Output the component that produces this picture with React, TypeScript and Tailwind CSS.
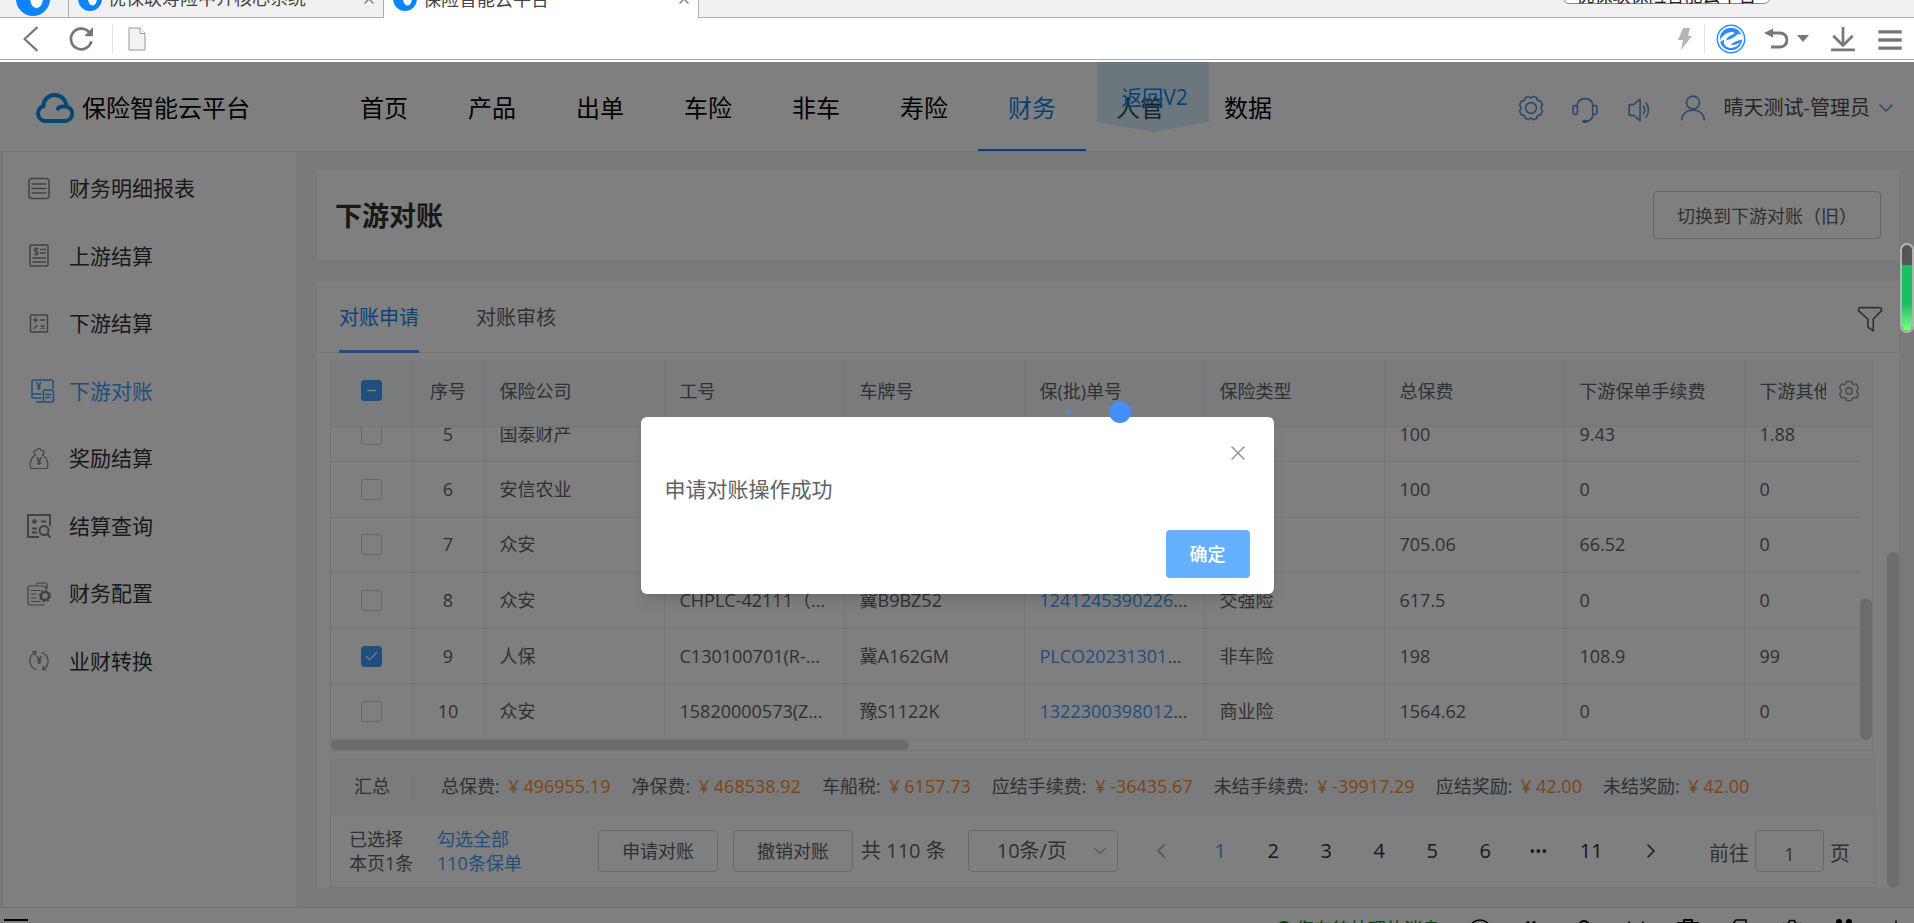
import { ChevronDown, ChevronLeft, ChevronRight, Check, Minus, X } from 'lucide-react';
import { ReactNode } from 'react';

const navItems = ['首页', '产品', '出单', '车险', '非车', '寿险', '财务', '人管', '数据']

const line = {
  fill: 'none',
  stroke: 'currentColor',
  strokeLinecap: 'round',
  strokeLinejoin: 'round',
} as const

const Svg = ({ className, width = 1.5, children }: { className: string; width?: number; children: ReactNode }) => (
  <svg viewBox="0 0 24 24" className={className} strokeWidth={width} {...line} aria-hidden="true">
    {children}
  </svg>
)

const Yen = ({ x, y, size = 9 }: { x: number; y: number; size?: number }) => (
  <text x={x} y={y} fontSize={size} textAnchor="middle" fill="currentColor" stroke="none" fontWeight="bold">¥</text>
)

const menuItems = [
  {
    title: '财务明细报表',
    icon: (
      <Svg className="size-6">
        <rect x="2" y="1.500" width="20" height="20" rx="3" />
        <path d="M5 7h14M5 11.500h14M5 16h14" />
      </Svg>
    )
  },
  {
    title: '上游结算',
    icon: (
      <Svg className="size-6">
        <rect x="3" y="1" width="18" height="21" rx="1" />
        <path d="M13.500 5.500h5M13.500 9h5M6 14h12.500M6 18h12.500" />
        <text x="9" y="11" fontSize="10" textAnchor="middle" fill="currentColor" stroke="none" fontWeight="bold">$</text>
      </Svg>
    )
  },
  {
    title: '下游结算',
    icon: (
      <Svg className="size-6">
        <rect x="3.500" y="3" width="17" height="17" rx="1" />
        <path d="M6.500 8h4M8.500 6v4M13.500 8h4M7 16.500l3-3M14 13.500l3 3M17 13.500l-3 3" />
      </Svg>
    )
  },
  {
    title: '下游对账',
    active: true,
    icon: (
      <Svg className="size-6 translate-x-1">
        <path d="M22 9V3a2 2 0 0 0-2-2H3a2 2 0 0 0-2 2v12h9M1 15v3a1 1 0 0 0 1 1h8M6 23h6" />
        <rect x="12.500" y="11" width="10" height="12" rx="1.500" />
        <path d="M15 15.500h5M15 18.500h4" />
        <Yen x={7.500} y={11} size={10} />
      </Svg>
    )
  },
  {
    title: '奖励结算',
    icon: (
      <Svg className="size-6" width={1.2}>
        <path d="M8.500 8C7.500 6.500 6.500 5.500 7 4c1-.8 1.800-.3 2.500-.8.800-.6 1-1.700 2.500-1.700s1.700 1.100 2.500 1.700c.7.5 1.500 0 2.500.8.5 1.500-.5 2.500-1.500 4M8.500 8C5 10 3.500 13 3.200 17c-.2 3 .3 4.500 1.800 4.500h14c1.500 0 2-1.500 1.800-4.500-.3-4-1.800-7-5.300-9" />
        <Yen x={12} y={18} size={10} />
      </Svg>
    )
  },
  {
    title: '结算查询',
    icon: (
      <Svg className="size-6" width={2}>
        <path d="M23 12V1H1v22h11M5 7.500h5M7.500 5v5M14 7.500h5M5 14.500h5M5 18.500h5" strokeLinecap="butt" />
        <circle cx="17" cy="16.500" r="4.500" />
        <path d="m20.500 20 2.500 3" />
      </Svg>
    )
  },
  {
    title: '财务配置',
    icon: (
      <Svg className="size-6" width={1.2}>
        <path d="M17 23H3a2 2 0 0 1-2-2V6a2 2 0 0 1 2-2h13a3 3 0 0 1 3 3M9 4c0-2 1-3 2-3h7a2 2 0 0 1 2 2v3M4 8.500h9M4 12h5M4 16h5M4 19.500h9" />
        <circle cx="18" cy="14" r="4" strokeWidth="2.500" />
        <circle cx="18" cy="14" r="5.500" strokeWidth="1.500" strokeDasharray="2 2.300" strokeLinecap="butt" />
      </Svg>
    )
  },
  {
    title: '业财转换',
    icon: (
      <Svg className="size-6" width={1.2}>
        <path d="M9 20.500A9.500 9.500 0 0 1 8.500 3M5.500 2.500l3.500.3-1 3.700M15 3.500a9.500 9.500 0 0 1 1.500 17M19.500 21l-4-.5 1-3.500" />
        <Yen x={12} y={15} size={10} />
      </Svg>
    )
  },
]

const columns = ['保险公司', '工号', '车牌号', '保(批)单号', '保险类型', '总保费', '下游保单手续费', '下游其他费用']

type Row = {
  no: number
  checked?: boolean
  cells: string[]
}

// cells: company, staff no, plate, policy no, type, premium, fee, other
const rows: Row[] = [
  { no: 5, cells: ['国泰财产', '', '', '', '', '100', '9.43', '1.88'] },
  { no: 6, cells: ['安信农业', '', '', '', '', '100', '0', '0'] },
  { no: 7, cells: ['众安', '', '', '', '', '705.06', '66.52', '0'] },
  { no: 8, cells: ['众安', 'CHPLC-42111（...', '冀B9BZ52', '1241245390226', '交强险', '617.5', '0', '0'] },
  { no: 9, checked: true, cells: ['人保', 'C130100701(R-...', '冀A162GM', 'PLCO20231301', '非车险', '198', '108.9', '99'] },
  { no: 10, cells: ['众安', '15820000573(Z...', '豫S1122K', '1322300398012', '商业险', '1564.62', '0', '0'] },
]

const totals = [
  ['总保费', '496955.19'],
  ['净保费', '468538.92'],
  ['车船税', '6157.73'],
  ['应结手续费', '-36435.67'],
  ['未结手续费', '-39917.29'],
  ['应结奖励', '42.00'],
  ['未结奖励', '42.00'],
]

const Favicon = ({ className }: { className: string }) => (
  <svg viewBox="0 0 24 24" className={className} aria-hidden="true">
    <circle cx="12" cy="12" r="12" fill="#0a84ff" />
    <ellipse cx="14.500" cy="11.500" rx="4.500" ry="7" fill="#fff" />
  </svg>
)

const BrowserTab = ({ title, active }: { title: string; active?: boolean }) => (
  <div className={active
    ? 'flex h-[38px] w-[314px] items-center bg-white pl-[9px] pr-[6px]'
    : 'flex h-[38px] w-[315px] items-center border-b border-r border-[#b0b0b0] bg-[#f1f1f1] pl-[9px] pr-[6px]'}
  >
    <Favicon className="size-6" />
    <span className="ml-[6px] flex-1 whitespace-nowrap text-[18px] text-[#444]">{title}</span>
    <button aria-label="关闭标签页" className="text-[#777]"><X className="size-4" strokeWidth={2} /></button>
  </div>
)

const BrowserChrome = () => (
  <div className="shrink-0 bg-white">
    <div className="flex h-[18px] items-end overflow-hidden bg-[#f1f1f1]">
      <div className="flex h-[38px] w-[69px] items-center border-b border-r border-[#b0b0b0] pl-4">
        <Favicon className="size-[34px]" />
      </div>
      <BrowserTab title="优保联寿险中介核心系统" />
      <BrowserTab title="保险智能云平台" active />
      <div className="flex h-[38px] flex-1 items-start justify-end border-b border-l border-[#b0b0b0] pr-36">
        <div className="flex h-6 w-[207px] items-end justify-center rounded-b-md border border-[#888] bg-white text-[18px] leading-4 text-[#222]">
          <span className="whitespace-nowrap">优保联保险智能云平台</span>
        </div>
      </div>
    </div>
    <div className="flex h-[42px] items-center border-b border-[#aaa] pl-[18px] pr-[10px] text-[#777]">
      <button aria-label="后退">
        <Svg className="size-[26px]" width={2}><path d="M18 1 6 12l12 11" strokeLinecap="butt" /></Svg>
      </button>
      <button aria-label="刷新" className="ml-6">
        <Svg className="size-[26px]" width={2.5}>
          <path d="M20 6.500A9.500 9.500 0 1 0 21.500 14" strokeLinecap="butt" />
          <path d="M23 1v8.500h-8z" fill="currentColor" stroke="none" />
        </Svg>
      </button>
      <div className="ml-[18px] h-7 w-px bg-[#e2e2e2]" />
      <svg viewBox="0 0 18 24" className="ml-[15px] h-6 w-[18px]" aria-hidden="true">
        <path d="M1 1h11l5 5.500V23H1z" fill="#f3f3f3" stroke="#999" />
        <path d="M12 1v5.500h5" fill="#fff" stroke="#999" />
      </svg>
      <div className="ml-auto flex items-center">
        <svg viewBox="0 0 14 24" className="h-6 w-[14px]" aria-hidden="true">
          <path d="M5 1h7l-2 8h4L3 23l2-10H0z" fill="#b5b5b5" />
        </svg>
        <div className="ml-3 h-7 w-px bg-[#e2e2e2]" />
        <svg viewBox="0 0 30 30" className="ml-[11px] size-[30px]" aria-hidden="true">
          <circle cx="15" cy="15" r="13.700" fill="#fff" stroke="#2f8cff" strokeWidth="1.500" />
          <circle cx="15" cy="15" r="11.200" fill="#2f8cff" />
          <path d="M2.500 17.500C6 10.500 12 7.500 17.500 8.300c2.500.5 1.500 2-1 2.700-3.500 1-5.500 2.500-6.500 5 5-1 9-3 11-4.500 2.500-1.500 4.500-.5 6 2v3c-6 .5-10 2-13 4 3 1.500 6.500.5 10-1-3 3.500-8 5.500-12 4-4-1.500-5-4.500-4-8.500-2 .8-4.500 1.500-5.500 2.500z" fill="#fff" transform="rotate(-6 15 15)" />
          <path d="M12 14.500c1-1.800 3-3 5.500-3.200 1.300 0 1 1.200-.5 1.800-1.500.7-3.200 1.200-5 1.400z" fill="#2f8cff" />
        </svg>
        <button aria-label="撤销" className="ml-[18px]">
          <Svg className="size-6" width={2.8}>
            <path d="M8 6h8a6.500 6.500 0 0 1 0 14H7" strokeLinecap="butt" />
            <path d="M0 6l9-4.500v9z" fill="currentColor" stroke="none" />
          </Svg>
        </button>
        <svg viewBox="0 0 12 7" className="ml-[9px] h-[7px] w-3" aria-hidden="true"><path d="M0 0h12L6 7z" fill="#777" /></svg>
        <button aria-label="下载" className="ml-[21px]">
          <Svg className="size-[26px]" width={2.5}><path d="M12 1v16M3 9l9 9 9-9M1 22h22" strokeLinecap="butt" /></Svg>
        </button>
        <button aria-label="菜单" className="ml-5">
          <Svg className="size-[28px] translate-y-px" width={2.8}><path d="M2 5h20M2 12h20M2 19h20" strokeLinecap="butt" /></Svg>
        </button>
      </div>
    </div>
    <div className="h-[2px]" />
  </div>
)

const Gear = ({ className }: { className: string }) => (
  <Svg className={className}>
    <path d="M9.500 1.500h5l1 2.500 2 1 2.800-.7 2 4.200L20.500 11v2l1.800 2.500-2 4.200-2.800-.7-2 1-1 2.500h-5l-1-2.500-2-1-2.800.7-2-4.200L3.500 13v-2L1.700 8.500l2-4.200L6.500 5l2-1z" />
    <circle cx="12" cy="12" r="3.500" />
  </Svg>
)

// eight-tooth gear used in the top bar
const SettingsGear = ({ className }: { className: string }) => (
  <Svg className={className}>
    <path d="M9.800 1.300c.6 1.500 3.800 1.500 4.400 0l3.500 1.300c-.7 1.700 1.200 3.600 3 2.900l2 3.800c-1.700.8-1.700 4.600 0 5.400l-2 3.800c-1.800-.7-3.700 1.200-3 2.900l-3.500 1.300c-.6-1.500-3.800-1.500-4.400 0l-3.500-1.300c.7-1.700-1.200-3.600-3-2.900l-2-3.800c1.700-.8 1.700-4.600 0-5.400l2-3.800c1.800.7 3.700-1.200 3-2.900z" />
    <circle cx="12" cy="12" r="5" />
  </Svg>
)

const Header = () => (
  <header className="flex h-[90px] shrink-0 items-center border-b border-[#e6e6e6] bg-white pr-4">
    <div className="flex w-[330px] shrink-0 items-center pl-[35px] pt-[2px]">
      <svg viewBox="0 0 39 30" className="h-[30px] w-[39px]" fill="none" stroke="#0a8fe8" strokeWidth="4" strokeLinecap="round" aria-hidden="true">
        <path d="M9 28h21a7.300 7.300 0 0 0 1.500-14.400C31 6.500 26 2 19.500 2S8.500 7 8.500 13A7.800 7.800 0 0 0 9 28zM31 13.600c-4-.5-7 0-8 2" />
      </svg>
      <span className="ml-2 whitespace-nowrap text-2xl text-black">保险智能云平台</span>
    </div>
    <nav className="flex h-full">
      {navItems.map(item => (
        <a
          key={item}
          href="#"
          className={item === '财务'
            ? 'flex w-[108px] items-center justify-center border-b-2 border-[#1083ee] pt-1 text-2xl text-[#1083ee]'
            : 'flex w-[108px] items-center justify-center border-b-2 border-transparent pt-1 text-2xl text-black'}
        >
          {item}
        </a>
      ))}
    </nav>
    <div className="ml-auto flex items-center pt-[3px] text-[#5a92d6]">
      <button aria-label="设置"><SettingsGear className="size-[26px]" /></button>
      <button aria-label="客服" className="ml-7 translate-y-[2px]">
        <Svg className="size-[26px]">
          <path d="M4.500 8.500C5 4 8 1.500 12 1.500S19 4 19.500 8.500M19.500 16c-.5 4-3 6-6.500 6.500" />
          <rect x="1" y="8" width="4" height="8" rx="1.500" />
          <rect x="19" y="8" width="4" height="8" rx="1.500" />
          <path d="M11 22.500h2" strokeWidth="3" />
        </Svg>
      </button>
      <button aria-label="消息" className="ml-7 translate-y-[2px]">
        <Svg className="size-[26px]">
          <path d="M3 7h4l6-5v20l-6-5H3zM16 8.500c1.500 2 1.500 5 0 7M18.500 5.500c3 3.500 3 9.500 0 13" />
        </Svg>
      </button>
      <Svg className="ml-7 size-[26px]">
        <circle cx="12" cy="7" r="6" />
        <path d="M1.500 23c.5-6 5-9 10.500-9s10 3 10.500 9" />
      </Svg>
      <button className="ml-[18px] flex items-center whitespace-nowrap text-xl text-[#4a4a4a]">
        晴天测试-管理员
        <ChevronDown className="ml-1 size-6 text-[#5a92d6]" strokeWidth={1.5} />
      </button>
    </div>
  </header>
)

const Sidebar = () => (
  <aside className="w-[298px] shrink-0 border-l-[3px] border-r border-l-[#f0f0f0] border-r-[#e0e0e0] bg-white pt-[3px]">
    <nav className="grid h-[540px] grid-rows-8">
      {menuItems.map(item => (
        <a
          key={item.title}
          href="#"
          className={item.active
            ? 'flex items-center gap-[18px] pl-6 text-[21px] text-[#409eff]'
            : 'flex items-center gap-[18px] pl-6 text-[21px] text-[#303133]'}
        >
          <span className={item.active ? '' : 'text-[#80848c]'}>{item.icon}</span>
          {item.title}
        </a>
      ))}
    </nav>
  </aside>
)

const Checkbox = ({ checked, partial, label }: { checked?: boolean; partial?: boolean; label: string }) => (
  <label className="relative mx-auto flex size-[21px]">
    <input
      type="checkbox"
      aria-label={label}
      defaultChecked={checked}
      className="size-[21px] appearance-none rounded-[3px] border border-[#c8ccd4] checked:border-[#409eff] checked:bg-[#409eff]"
    />
    {checked && !partial && <Check className="pointer-events-none absolute left-[3px] top-[3px] size-[15px] text-white" />}
    {partial && <Minus className="pointer-events-none absolute left-1 top-1 size-[13px] text-white" strokeWidth={3} />}
  </label>
)

const Cols = () => (
  <colgroup>
    <col className="w-[81px]" />
    <col className="w-[72px]" />
    {columns.map((c, i) => <col key={c} className={i < columns.length - 1 ? 'w-[180px]' : ''} />)}
  </colgroup>
)

const DataTable = () => (
  <div className="mr-[3px] flex min-h-0 flex-1 flex-col border-x border-b border-[#e6e9f2] text-[18px] text-[#606266]">
    <div className="h-[67px] shrink-0 border-b border-[#e6e9f2] bg-[#f3f6fa]">
      <table className="h-full w-full table-fixed border-collapse">
        <Cols />
        <thead>
          <tr>
            <th className="border-r border-[#e6e9f2] pb-[6px]"><Checkbox label="全选" checked partial /></th>
            <th className="border-r border-[#e6e9f2] pb-1 font-normal">序号</th>
            {columns.map((c, i) => i < columns.length - 1 ? (
              <th key={c} className="border-r border-[#e6e9f2] pb-1 pl-[15px] text-left font-normal">{c}</th>
            ) : (
              <th key={c} className="pb-1 pl-[15px] font-normal">
                <div className="flex items-center">
                  <span className="min-w-0 flex-1 overflow-hidden whitespace-nowrap text-left">{c}</span>
                  <button aria-label="列设置" className="flex w-[46px] shrink-0 items-center justify-center text-[#8a8e96]">
                    <Gear className="size-[22px]" />
                  </button>
                </div>
              </th>
            ))}
          </tr>
        </thead>
      </table>
    </div>
    <div className="relative flex min-h-0 flex-1 flex-col justify-end overflow-hidden pr-[11px]">
      <table className="h-[333px] w-full shrink-0 table-fixed border-collapse">
        <Cols />
        <tbody>
          {rows.map(row => (
            <tr key={row.no} className="border-b border-[#e6e9f2]">
              <td className="border-r border-[#e6e9f2]"><Checkbox label={`选择第${row.no}行`} checked={row.checked} /></td>
              <td className="border-r border-[#e6e9f2] text-center">{row.no}</td>
              {row.cells.map((cell, i) => (
                <td
                  key={i}
                  className={i < row.cells.length - 1
                    ? 'overflow-hidden whitespace-nowrap border-r border-[#e6e9f2] pl-[15px]'
                    : 'overflow-hidden whitespace-nowrap pl-[15px]'}
                >
                  {i === 3 && cell ? <><a href="#" className="text-[#409eff]">{cell}</a>...</> : cell}
                </td>
              ))}
            </tr>
          ))}
        </tbody>
      </table>
      <div className="absolute bottom-0 right-0 h-[142px] w-3 rounded-full bg-[#d8d8d8]" />
    </div>
    <div className="h-[10px] shrink-0">
      <div className="h-full w-3/8 rounded-full bg-[#d8d8d8]" />
    </div>
  </div>
)

const Summary = () => (
  <div className="mt-[7px] flex h-[57px] shrink-0 items-center whitespace-nowrap border-b border-[#e6e9f2] bg-[#f3f6fa] pl-6 text-[18px] text-[#606266]">
    <span>汇总</span>
    <span className="ml-[22px] mr-7 h-6 w-px bg-[#dcdfe6]" />
    <div className="flex gap-[21px]">
      {totals.map(([label, value]) => (
        <span key={label}>
          {label}: <span className="ml-1 text-[#ff8a1e]">¥ {value}</span>
        </span>
      ))}
    </div>
  </div>
)

const Pager = () => (
  <div className="flex h-[73px] shrink-0 items-center whitespace-nowrap border-x border-b border-[#e6e9f2] pl-[18px] pr-[25px] text-[18px] text-[#606266]">
    <div className="w-[88px] leading-6">已选择<br />本页1条</div>
    <a href="#" className="w-[161px] leading-6 text-[#409eff]">勾选全部<br />110条保单</a>
    <button className="h-[42px] w-[120px] rounded border border-[#d0d3dc]">申请对账</button>
    <button className="ml-[15px] h-[42px] w-[120px] rounded border border-[#d0d3dc]">撤销对账</button>
    <span className="ml-2 text-xl">共 110 条</span>
    <div className="relative ml-[22px]">
      <select aria-label="每页条数" className="h-[42px] w-[150px] appearance-none rounded border border-[#d0d3dc] bg-transparent pl-7 text-xl">
        <option>10条/页</option>
      </select>
      <ChevronDown className="pointer-events-none absolute right-2 top-[11px] size-5 text-[#b4b8c0]" strokeWidth={1.5} />
    </div>
    <div className="ml-[17px] flex items-center text-xl text-[#303133]">
      <button aria-label="上一页" className="mr-[6px] flex w-[53px] justify-center text-[#b4b8c0]"><ChevronLeft className="size-6" /></button>
      {['1', '2', '3', '4', '5', '6', '•••', '11'].map(p => (
        <button
          key={p}
          className={p === '1'
            ? 'w-[53px] text-[#409eff]'
            : p === '•••' ? 'w-[53px] text-base' : 'w-[53px]'}
        >
          {p}
        </button>
      ))}
      <button aria-label="下一页" className="flex w-[66px] justify-center"><ChevronRight className="size-6" strokeWidth={1.5} /></button>
    </div>
    <label className="ml-auto flex items-center gap-[6px] text-xl">
      <span className="pt-[6px]">前往</span>
      <input defaultValue="1" className="h-[42px] w-[69px] rounded border border-[#d0d3dc] bg-transparent pt-[6px] text-center text-[18px]" />
      <span className="pt-[6px]">页</span>
    </label>
  </div>
)

const StatusBar = () => (
  <footer className="flex h-4 shrink-0 items-start overflow-hidden border-t border-[#e0e0e0] bg-white pl-1 pr-[6px] pt-[11px] text-black">
    <div className="h-[2px] w-6 bg-black" />
    <div className="ml-auto flex items-start gap-7">
      <span className="flex items-center gap-1 whitespace-nowrap text-[18px] leading-5 text-[#008a00]">
        <span className="size-4 rounded-full bg-[#008a00]" />您有待处理的消息
      </span>
      <Svg className="size-6"><ellipse cx="12" cy="10" rx="10" ry="9" /></Svg>
      <Svg className="size-6"><path d="M7 3h2M13 3h2" /></Svg>
      <Svg className="size-6" width={2}><circle cx="12" cy="7" r="5" /></Svg>
      <Svg className="size-6"><path d="M5 3v8M19 3v8" /></Svg>
      <Svg className="size-6" width={2}><path d="M2 4h20v16H2zM8 4V1h8v3" /></Svg>
      <Svg className="size-6"><path d="M4 20V6l4-5h10v4h-6v15" /></Svg>
      <Gear className="size-6" />
      <Svg className="size-6" width={3}><circle cx="7" cy="3" r="1.500" /><circle cx="17" cy="3" r="1.500" /></Svg>
      <Svg className="size-6"><path d="M12 2v8M6 5l2 3M18 5l-2 3" /></Svg>
    </div>
  </footer>
)

const SuccessDialog = () => (
  <div role="dialog" aria-label="提示" className="relative flex h-[177px] w-[633px] flex-col rounded-md bg-white px-6 pb-4 pt-6 shadow-lg">
    <button aria-label="关闭" className="self-end text-[#909399]"><X className="size-6" strokeWidth={1.5} /></button>
    <p className="text-[21px] leading-[48px] text-[#606266]">申请对账操作成功</p>
    <button className="mt-auto h-12 w-[84px] self-end rounded bg-[#66b1ff] text-[18px] font-medium text-white">确定</button>
    <span className="absolute -top-[7px] left-[426px] size-1 rounded-full bg-[#448ef7]" />
    <span className="absolute -top-4 left-[468px] size-[22px] rounded-full bg-[#448ef7]" />
  </div>
)

export default function App() {
  return (
    <div className="flex h-screen flex-col overflow-hidden font-['Open_Sans','Noto_Sans_CJK_SC',sans-serif]">
      <BrowserChrome />
      <div className="relative flex min-h-0 flex-1 flex-col">
        <Header />
        <div className="flex min-h-0 flex-1 bg-[#f3f3f3]">
          <Sidebar />
          <main className="flex min-w-0 flex-1 flex-col pb-[19px] pl-[19px] pr-[15px] pt-[18px]">
            <section className="flex h-[90px] shrink-0 items-center justify-between bg-white pl-[18px] pr-[18px]">
              <h1 className="pt-[2px] text-[27px] font-bold text-[#303133]">下游对账</h1>
              <button className="h-12 w-[228px] rounded border border-[#c4c8d2] pt-[2px] text-[18px] text-[#606266]">切换到下游对账（旧）</button>
            </section>
            <section className="relative mt-[21px] flex min-h-0 flex-1 flex-col bg-white">
              <div className="flex h-[72px] shrink-0 items-center border-b border-[#dfe2ec] pl-[22px] pr-4 text-xl">
                <button className="h-[72px] border-b-[3px] border-[#409eff] pt-[6px] text-[#0f86f5]">对账申请</button>
                <button className="ml-[57px] h-[72px] border-b-[3px] border-transparent pt-[6px] text-[#606266]">对账审核</button>
                <button aria-label="筛选" className="ml-auto pt-1 text-[#606266]">
                  <Svg className="size-[26px]"><path d="M2.500 1.500h19a1 1 0 0 1 1 1v2L15 12v11l-5-3.500V12L1.500 4.500v-2a1 1 0 0 1 1-1z" /></Svg>
                </button>
              </div>
              <div className="flex min-h-0 flex-1 flex-col pl-[13px] pr-[23px] pt-[7px]">
                <DataTable />
                <Summary />
                <Pager />
              </div>
              <div className="absolute bottom-0 right-0 h-[336px] w-3 rounded-full bg-[#d8d8d8]" />
            </section>
          </main>
        </div>
        <StatusBar />

        {/* link back to the old version, hangs over the nav */}
        <a href="#" className="absolute left-[1097px] top-0 flex h-[70px] w-28 items-center justify-center bg-[#8ad2f0]/35 pt-[2px] pl-[3px] text-[21px] text-[#1083ee] [clip-path:polygon(0_0,100%_0,100%_86%,50%_100%,0_86%)]">
          返回V2
        </a>

        <div className="absolute inset-0 flex items-center justify-center bg-black/50 pt-[26px]">
          <SuccessDialog />
        </div>

        {/* side meter */}
        <div className="absolute right-0 top-[181px] flex h-[90px] w-[14px] flex-col overflow-hidden rounded-full border-2 border-[#b4b4b4] bg-[#555]">
          <div className="mt-5 flex-1 rounded-b-full bg-linear-to-b from-[#18c060] from-60% to-[#7dff80]" />
        </div>
      </div>
    </div>
  )
}
